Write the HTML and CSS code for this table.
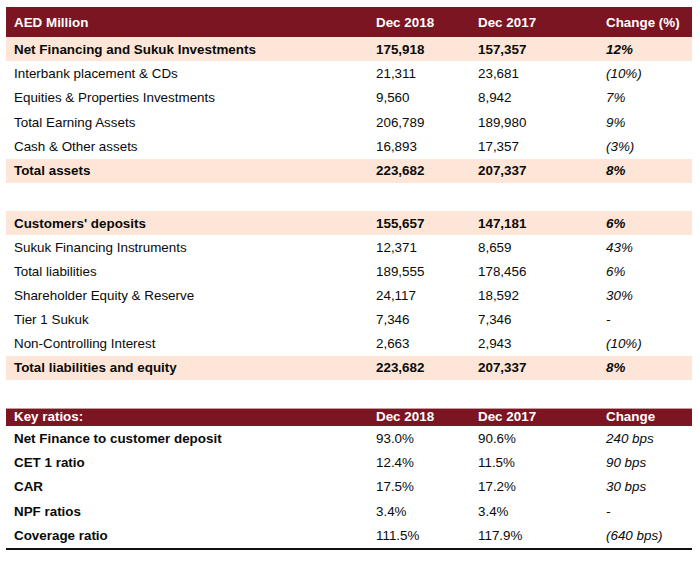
FILE: index.html
```html
<!DOCTYPE html>
<html>
<head>
<meta charset="utf-8">
<link rel="stylesheet" href="styles.css">
</head>
<body>
<div class="sheet">
  <div class="section s1">
    <div class="row head"><span>AED Million</span><span>Dec 2018</span><span>Dec 2017</span><span>Change (%)</span></div>
    <div class="row band bold"><span>Net Financing and Sukuk Investments</span><span>175,918</span><span>157,357</span><span class="chg">12%</span></div>
    <div class="row"><span>Interbank placement &amp; CDs</span><span>21,311</span><span>23,681</span><span class="chg">(10%)</span></div>
    <div class="row"><span>Equities &amp; Properties Investments</span><span>9,560</span><span>8,942</span><span class="chg">7%</span></div>
    <div class="row"><span>Total Earning Assets</span><span>206,789</span><span>189,980</span><span class="chg">9%</span></div>
    <div class="row"><span>Cash &amp; Other assets</span><span>16,893</span><span>17,357</span><span class="chg">(3%)</span></div>
    <div class="row band bold"><span>Total assets</span><span>223,682</span><span>207,337</span><span class="chg">8%</span></div>
  </div>
  <div class="section s2">
    <div class="row band bold"><span>Customers' deposits</span><span>155,657</span><span>147,181</span><span class="chg">6%</span></div>
    <div class="row"><span>Sukuk Financing Instruments</span><span>12,371</span><span>8,659</span><span class="chg">43%</span></div>
    <div class="row"><span>Total liabilities</span><span>189,555</span><span>178,456</span><span class="chg">6%</span></div>
    <div class="row"><span>Shareholder Equity &amp; Reserve</span><span>24,117</span><span>18,592</span><span class="chg">30%</span></div>
    <div class="row"><span>Tier 1 Sukuk</span><span>7,346</span><span>7,346</span><span class="chg">-</span></div>
    <div class="row"><span>Non-Controlling Interest</span><span>2,663</span><span>2,943</span><span class="chg">(10%)</span></div>
    <div class="row band bold"><span>Total liabilities and equity</span><span>223,682</span><span>207,337</span><span class="chg">8%</span></div>
  </div>
  <div class="section s3">
    <div class="row head small"><span>Key ratios:</span><span>Dec 2018</span><span>Dec 2017</span><span>Change</span></div>
    <div class="row"><span class="lbl">Net Finance to customer deposit</span><span>93.0%</span><span>90.6%</span><span class="chg">240 bps</span></div>
    <div class="row"><span class="lbl">CET 1 ratio</span><span>12.4%</span><span>11.5%</span><span class="chg">90 bps</span></div>
    <div class="row"><span class="lbl">CAR</span><span>17.5%</span><span>17.2%</span><span class="chg">30 bps</span></div>
    <div class="row"><span class="lbl">NPF ratios</span><span>3.4%</span><span>3.4%</span><span class="chg">-</span></div>
    <div class="row"><span class="lbl">Coverage ratio</span><span>111.5%</span><span>117.9%</span><span class="chg">(640 bps)</span></div>
  </div>
</div>
</body>
</html>
```

FILE: styles.css
```css
html, body {
  margin: 0;
  padding: 0;
  background: #ffffff;
}

body {
  font-family: "Liberation Sans", Arial, Helvetica, sans-serif;
  font-size: 13.4px;
  color: #0a0a0a;
}

.sheet {
  width: 686px;
  padding: 7px 0 0 6px;
  display: flex;
  flex-direction: column;
}

.section {
  display: flex;
  flex-direction: column;
}

.row {
  display: grid;
  grid-template-columns: 362px 102px 128px 1fr;
  align-items: center;
  height: 24.33px;
}

.row span {
  padding-left: 8px;
  white-space: nowrap;
}

.s2 {
  margin-top: 28px;
}

.s2 .row {
  height: 24.14px;
}

.s3 {
  margin-top: 28px;
  border-bottom: 2px solid #111;
}

.s3 .row {
  height: 24.4px;
}

.row.head {
  background: #7c1522;
  color: #ffffff;
  font-weight: bold;
  height: 30px;
}

.s3 .row.head {
  height: 18px;
  box-sizing: border-box;
  border-top: 1px solid #c99aa0;
  line-height: 16px;
}

.band {
  background: #fde6d8;
}

.bold {
  font-weight: bold;
}

.lbl {
  font-weight: bold;
}

.chg {
  font-style: italic;
}
```
